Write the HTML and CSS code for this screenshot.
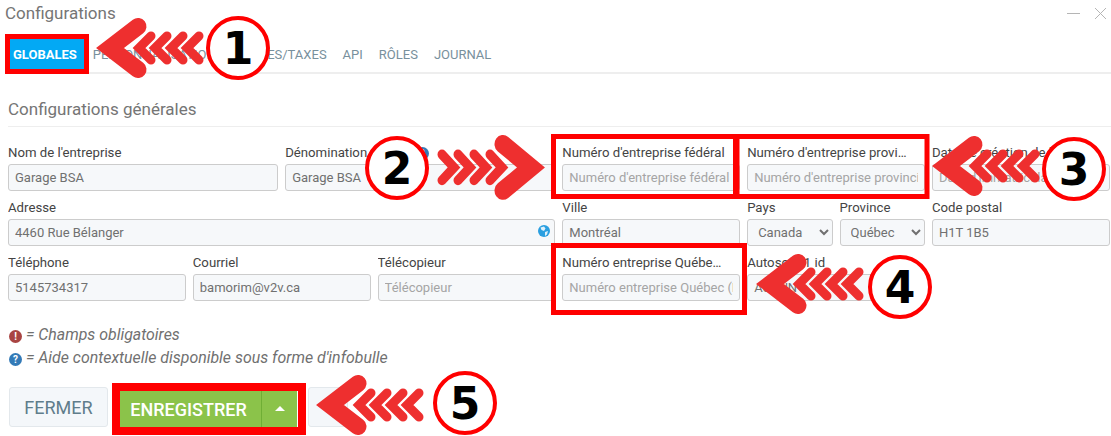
FILE: index.html
```html
<!DOCTYPE html>
<html lang="en">
<head>
  <meta charset="UTF-8" />
  <meta name="viewport" content="width=device-width, initial-scale=1.0"/>
  <title>Configurations</title>
  <link rel="stylesheet" href="styles.css">
</head>
<body>

  <div class="page">
    <div class="window-header">
      <span class="window-title">Configurations</span>
      <div class="window-controls">
        <svg width="13" height="13" viewBox="0 0 13 13"><path d="M0 6.5H13" stroke="#b5b5b5" stroke-width="1"/></svg>
        <svg width="13" height="13" viewBox="0 0 13 13"><path d="M1 1L12 12M12 1L1 12" stroke="#b5b5b5" stroke-width="1"/></svg>
      </div>
    </div>

    <div class="tabs">
      <a class="tab active">GLOBALES</a>
      <a class="tab">PERSONNALISATION</a>
      <a class="tab">DEVISES/TAXES</a>
      <a class="tab">API</a>
      <a class="tab">RÔLES</a>
      <a class="tab">JOURNAL</a>
    </div>

    <h3 class="section-title">Configurations générales</h3>

    <div class="form-grid">
      <div class="field span-3">
        <label>Nom de l'entreprise</label>
        <input type="text" value="Garage BSA" />
      </div>
      <div class="field span-3">
        <label>Dénomination sociale <span class="info-icon">?</span></label>
        <input type="text" value="Garage BSA" />
      </div>
      <div class="field span-2">
        <label>Numéro d'entreprise fédéral</label>
        <input type="text" placeholder="Numéro d'entreprise fédéral" />
      </div>
      <div class="field span-2">
        <label>Numéro d'entreprise provincial</label>
        <input type="text" placeholder="Numéro d'entreprise provincial" />
      </div>
      <div class="field span-2">
        <label>Date de création de l'entreprise</label>
        <input type="text" placeholder="Date d'immatriculation" />
      </div>

      <div class="field span-6">
        <label>Adresse</label>
        <div class="input-wrap">
          <input type="text" value="4460 Rue Bélanger" />
          <svg class="globe" width="12" height="12" viewBox="0 0 12 12">
            <circle cx="6" cy="6" r="6" fill="#2a9fe0"/>
            <path d="M2.5 2.5L6 1.5L7.5 3.5L6 6L3.5 5ZM7 7L10 6L9 9.5L7 11Z" fill="#dff1fb"/>
          </svg>
        </div>
      </div>
      <div class="field span-2">
        <label>Ville</label>
        <input type="text" value="Montréal" />
      </div>
      <div class="field span-1">
        <label>Pays</label>
        <select><option>Canada</option></select>
      </div>
      <div class="field span-1">
        <label>Province</label>
        <select><option>Québec</option></select>
      </div>
      <div class="field span-2">
        <label>Code postal</label>
        <input type="text" value="H1T 1B5" />
      </div>

      <div class="field span-2">
        <label>Téléphone</label>
        <input type="text" value="5145734317" />
      </div>
      <div class="field span-2">
        <label>Courriel</label>
        <input type="text" value="bamorim@v2v.ca" />
      </div>
      <div class="field span-2">
        <label>Télécopieur</label>
        <input type="text" placeholder="Télécopieur" />
      </div>
      <div class="field span-2">
        <label>Numéro entreprise Québec (NEQ)</label>
        <input type="text" placeholder="Numéro entreprise Québec (NEQ)" />
      </div>
      <div class="field span-2">
        <label>Autosoft_1 id</label>
        <input type="text" value="AUCUN" />
      </div>
    </div>

    <div class="legend">
      <p><span class="info-icon required">!</span> = Champs obligatoires</p>
      <p><span class="info-icon">?</span> = Aide contextuelle disponible sous forme d'infobulle</p>
    </div>

    <div class="actions">
      <button class="btn">FERMER</button>
      <div class="btn-group">
        <button class="btn-save">ENREGISTRER</button>
        <button class="btn-caret"><span class="caret"></span></button>
      </div>
      <button class="btn btn-extra"></button>
    </div>
  </div>

  <!-- numbered callouts drawn over the screenshot -->
  <svg class="callouts" width="1111" height="436" viewBox="0 0 1111 436">
    <defs>
      <g id="arrow">
        <polyline points="41,8.5 13,30 41,51.5" fill="none" stroke="#ee2f2f" stroke-width="17" stroke-linecap="round"/>
        <polyline points="54,18 42,30 54,42" fill="none" stroke="#ee2f2f" stroke-width="9" stroke-linecap="round"/>
        <polyline points="70,18 58,30 70,42" fill="none" stroke="#ee2f2f" stroke-width="9" stroke-linecap="round"/>
        <polyline points="86,18 74,30 86,42" fill="none" stroke="#ee2f2f" stroke-width="9" stroke-linecap="round"/>
        <polyline points="102,18 90,30 102,42" fill="none" stroke="#ee2f2f" stroke-width="9" stroke-linecap="round"/>
      </g>
    </defs>

    <rect class="red-box" x="7.5" y="36.5" width="79" height="35" />
    <rect class="red-box" x="553.5" y="136.5" width="182" height="60" />
    <rect class="red-box" x="737" y="136.5" width="190" height="60" />
    <rect class="red-box" x="553.5" y="245.5" width="191" height="67" />
    <rect class="red-box thick" x="116" y="387" width="186" height="44" />

    <use href="#arrow" transform="translate(97 18)" />
    <use href="#arrow" transform="translate(544 135) scale(-1 1.08)" />
    <use href="#arrow" transform="translate(933 136)" />
    <use href="#arrow" transform="translate(757 254)" />
    <use href="#arrow" transform="translate(317 375)" />

    <circle class="num-circle" cx="238" cy="48" r="30" />
    <circle class="num-circle" cx="397" cy="168" r="30" />
    <circle class="num-circle" cx="1074" cy="169" r="30" />
    <circle class="num-circle" cx="900" cy="287" r="30" />
    <circle class="num-circle" cx="465" cy="403" r="30" />

    <text class="num" x="238" y="64">1</text>
    <text class="num" x="397" y="184">2</text>
    <text class="num" x="1074" y="185">3</text>
    <text class="num" x="900" y="303">4</text>
    <text class="num" x="465" y="419">5</text>
  </svg>

</body>
</html>
```

FILE: styles.css
```css
* {
  box-sizing: border-box;
  margin: 0;
  padding: 0;
}

body {
  font-family: Roboto, 'Liberation Sans', sans-serif;
  background-color: white;
  color: #555;
  width: 1111px;
  height: 436px;
  overflow: hidden;
  position: relative;
}

.window-header {
  height: 26px;
  padding: 0 4px 0 5px;
  display: flex;
  align-items: center;
  justify-content: space-between;
}

.window-title {
  font-size: 17px;
  color: #757575;
}

.window-controls {
  display: flex;
  gap: 14px;
}

.tabs {
  display: flex;
  margin: 13px 0 0 5px;
  padding-bottom: 2px;
  border-bottom: 2px solid #eeeeee;
  height: 35px;
}

.tab {
  padding: 0 8px;
  font-size: 13px;
  line-height: 31px;
  color: #78909c;
}

.tab.active {
  background-color: #03a9f4;
  color: white;
  font-weight: 700;
}

.section-title {
  font-size: 17px;
  font-weight: 400;
  color: #757575;
  margin: 25px 0 0 8px;
  padding-bottom: 7px;
  border-bottom: 1px solid #eeeeee;
  line-height: 20px;
}

.form-grid {
  display: grid;
  grid-template-columns: repeat(12, 85.4px);
  gap: 8px 7px;
  margin: 17px 0 0 8px;
}

.span-1 { grid-column: span 1; }
.span-2 { grid-column: span 2; }
.span-3 { grid-column: span 3; }
.span-6 { grid-column: span 6; }

.field {
  min-width: 0;
}

.field label {
  display: block;
  font-size: 13.2px;
  line-height: 18px;
  margin-bottom: 2px;
  padding-right: 14px;
  color: #444;
  white-space: nowrap;
  overflow: hidden;
  text-overflow: ellipsis;
}

.field input,
.field select {
  display: block;
  width: 100%;
  height: 27px;
  padding: 0 6px;
  font-family: Roboto, 'Liberation Sans', sans-serif;
  font-size: 13px;
  color: #707070;
  background-color: #f6f8fa;
  border: 1px solid #ccc;
  border-radius: 3px;
}

.field input::placeholder {
  color: #a5a5a5;
  opacity: 1;
}

.input-wrap {
  position: relative;
}

.globe {
  position: absolute;
  top: 6px;
  right: 5px;
}

.info-icon {
  display: inline-block;
  width: 13px;
  height: 13px;
  border-radius: 50%;
  background-color: #337ab7;
  color: white;
  font-size: 10px;
  font-weight: 700;
  font-style: normal;
  line-height: 13px;
  text-align: center;
}

.info-icon.required {
  background-color: #a94442;
}

.legend {
  margin: 22px 0 0 9px;
  font-size: 15.9px;
  font-style: italic;
  color: #707070;
}

.legend p {
  line-height: 23px;
}

.actions {
  display: flex;
  align-items: stretch;
  height: 40px;
  margin: 18px 0 0 9px;
}

.btn {
  width: 99px;
  background-color: #f4f7fa;
  border: 1px solid #e3e8ec;
  border-radius: 3px;
  color: #607d8b;
  font-family: inherit;
  font-size: 18px;
}

.btn-extra {
  width: 40px;
  margin-left: 11px;
}

.btn-group {
  display: flex;
  height: 36px;
  margin: 4px 0 0 12px;
}

.btn-save {
  width: 141px;
  padding-right: 4px;
  background-color: #8bc34a;
  border: none;
  color: white;
  font-family: inherit;
  font-size: 18px;
  font-weight: 500;
}

.btn-caret {
  width: 36px;
  background-color: #8bc34a;
  border: none;
  border-left: 1px solid #6fae35;
}

.caret {
  display: block;
  width: 10px;
  margin: 0 auto 2px;
  border-left: 5px solid transparent;
  border-right: 5px solid transparent;
  border-bottom: 5px solid white;
}

.callouts {
  position: absolute;
  top: 0;
  left: 0;
}

.red-box {
  fill: none;
  stroke: #ff0000;
  stroke-width: 5;
}

.red-box.thick {
  stroke-width: 8;
}

.num-circle {
  fill: white;
  stroke: #ff0000;
  stroke-width: 4;
}

.num {
  font-family: 'DejaVu Sans', sans-serif;
  font-size: 44px;
  font-weight: 700;
  text-anchor: middle;
  fill: black;
}
```
